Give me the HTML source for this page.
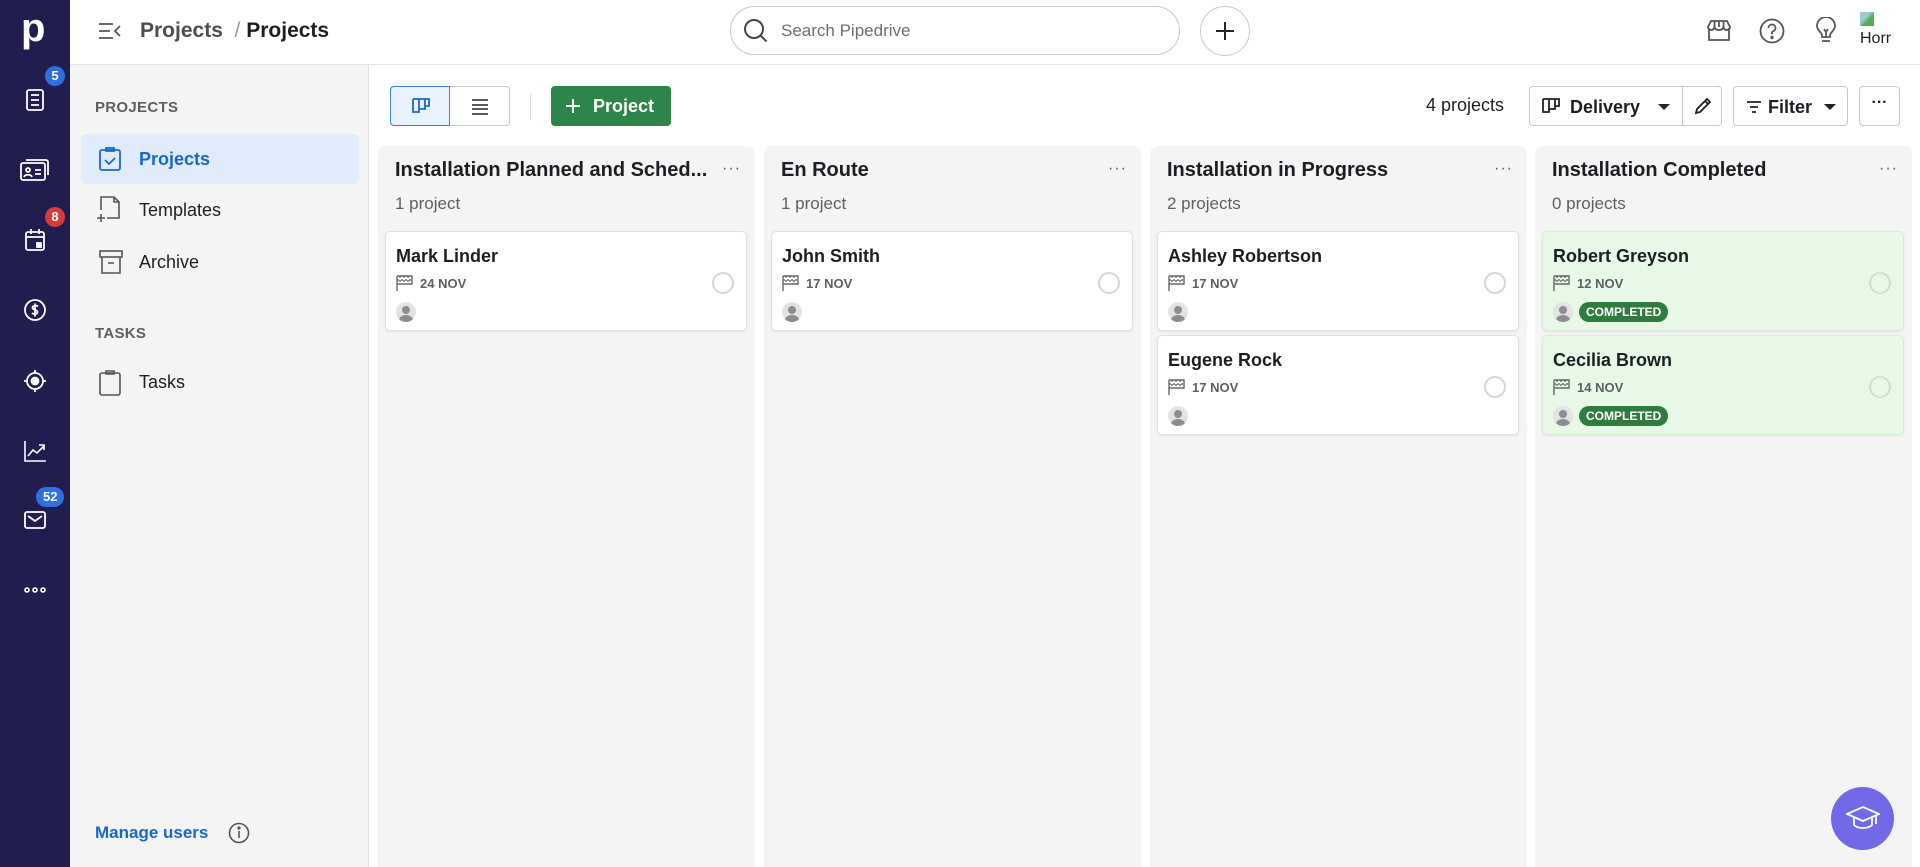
<!DOCTYPE html>
<html style="overflow:hidden;height:867px"><head><meta charset="utf-8"><style>
*{box-sizing:border-box;margin:0;padding:0}
body{width:1920px;height:867px;overflow:hidden;font-family:"Liberation Sans",sans-serif;background:#fff;position:relative;color:#1b1f23}
.abs{position:absolute}
.rail{left:0;top:0;width:70px;height:867px;background:#211d4e}
.ri{position:absolute;left:23px;width:24px;height:24px}
.badge{position:absolute;height:20px;min-width:20px;border-radius:10px;color:#fff;font-size:13px;font-weight:bold;text-align:center;line-height:20px;padding:0 5px}
.hdr{left:70px;top:0;width:1850px;height:65px;border-bottom:1px solid #e3e3e3;background:#fff}
.side{left:70px;top:65px;width:299px;height:802px;background:#f4f4f4;border-right:1px solid #e0e0e0}
.sl{position:absolute;left:25px;font-size:15px;color:#5c5f63;font-weight:bold;letter-spacing:.3px}
.si{position:absolute;left:11px;width:278px;height:50px;border-radius:6px;font-size:18px;line-height:50px;padding-left:58px;color:#1b1f23}
.si svg{position:absolute;left:18px;top:13px}
.btn{position:absolute;border:1px solid #c6c8cc;border-radius:4px;background:#fff;height:40px;top:86px}
.col{position:absolute;top:146px;width:377px;height:721px;background:#f4f4f4;border-radius:8px 8px 0 0}
.ct{position:absolute;left:17px;top:13px;font-size:20px;font-weight:bold;color:#1b1f23;white-space:nowrap}
.cc{position:absolute;left:17px;top:48px;font-size:17px;color:#5c5f63}
.dots{position:absolute;right:14px;top:14px;font-size:16px;color:#555;letter-spacing:1px}
.card{position:absolute;left:7px;width:362px;height:100px;background:#fff;border:1px solid #e0e0e0;border-radius:5px;box-shadow:0 1px 2px rgba(0,0,0,.08)}
.card.g{background:#e8f8e6;border-color:#d6ecd4}
.nm{position:absolute;left:10px;top:14px;font-size:18px;font-weight:bold}
.dt{position:absolute;left:10px;top:43px;font-size:13px;font-weight:bold;color:#5c5f63}
.dt svg{vertical-align:-3px;margin-right:6px}
.av{position:absolute;left:10px;top:70px;width:20px;height:20px;border-radius:50%;background:#e3e3e3;overflow:hidden}
.av:before{content:"";position:absolute;left:6px;top:4px;width:8px;height:8px;border-radius:50%;background:#8a8d91}
.av:after{content:"";position:absolute;left:3px;top:13px;width:14px;height:10px;border-radius:50%;background:#8a8d91}
.chk{position:absolute;right:12px;top:40px;width:22px;height:22px;border-radius:50%;border:2px solid #d6d6d6}
.comp{position:absolute;left:36px;top:70px;height:20px;border-radius:10px;background:#2e7d3e;color:#fff;font-size:12px;font-weight:bold;line-height:20px;padding:0 7px}
</style></head><body>
<div class="abs rail">
  <div class="abs" style="left:21px;top:8px;color:#fff;font-size:40px;font-weight:bold;line-height:40px">p</div>
  <svg class="ri" style="top:88px" viewBox="0 0 24 24" fill="none" stroke="#fff" stroke-width="1.8"><rect x="4" y="2" width="16" height="20" rx="2"/><path d="M8 7h8M8 12h8M8 17h8"/></svg>
  <div class="badge" style="left:45px;top:66px;background:#2f6fe0">5</div>
  <svg class="ri" style="top:158px;left:20px;width:30px" viewBox="0 0 30 24" fill="none" stroke="#fff" stroke-width="1.8"><rect x="1" y="5" width="24" height="17" rx="2"/><path d="M6 2h20a2 2 0 0 1 2 2v13"/><circle cx="8" cy="12" r="2"/><path d="M4 19c1-3 7-3 8 0M15 12h6M15 16h6"/></svg>
  <svg class="ri" style="top:228px" viewBox="0 0 24 24" fill="none" stroke="#fff" stroke-width="1.8"><rect x="3" y="4" width="18" height="18" rx="2"/><path d="M8 1v5M16 1v5M3 9h18"/><rect x="14" y="15" width="4" height="4" fill="#fff"/></svg>
  <div class="badge" style="left:45px;top:207px;background:#d63b3b">8</div>
  <svg class="ri" style="top:298px" viewBox="0 0 24 24" fill="none" stroke="#fff" stroke-width="1.8"><circle cx="12" cy="12" r="10"/><path d="M15 8.5c-1-1-5-1.5-5.5 1s5 2 5 4.5-4 2.5-5.5 1M12 5.5v13"/></svg>
  <svg class="ri" style="top:369px" viewBox="0 0 24 24" fill="none" stroke="#fff" stroke-width="1.8"><circle cx="12" cy="12" r="8"/><circle cx="12" cy="12" r="3.5" fill="#fff"/><path d="M12 1v3M12 20v3M1 12h3M20 12h3"/></svg>
  <svg class="ri" style="top:439px" viewBox="0 0 24 24" fill="none" stroke="#fff" stroke-width="1.6"><path d="M2 2v20h21M5 17l5-6 4 3 7-7M16 6h5v5"/></svg>
  <div class="badge" style="left:36px;top:487px;background:#2f6fe0;padding:0 7px">52</div>
  <svg class="ri" style="top:508px" viewBox="0 0 24 24" fill="none" stroke="#fff" stroke-width="1.8"><rect x="2" y="4" width="20" height="16" rx="2"/><path d="M5 8l7 5 7-5"/></svg>
  <svg class="ri" style="top:578px" viewBox="0 0 24 24" fill="none" stroke="#fff" stroke-width="1.6"><circle cx="4" cy="12" r="2"/><circle cx="12" cy="12" r="2"/><circle cx="20" cy="12" r="2"/></svg>
</div>
<div class="abs hdr">
  <svg class="abs" style="left:28px;top:21px" width="24" height="20" viewBox="0 0 24 20" fill="none" stroke="#555" stroke-width="1.8"><path d="M1 3h14M1 10h11M1 17h14M22 5l-5 5 5 5"/></svg>
  <div class="abs" style="left:70px;top:19px;font-size:21px;color:#4a4d52;font-weight:bold">Projects <span style="color:#999;font-weight:normal">&nbsp;/&nbsp;</span><span style="color:#1b1f23">Projects</span></div>
  <div class="abs" style="left:660px;top:6px;width:450px;height:49px;border:1px solid #c6c8cc;border-radius:25px">
    <svg class="abs" style="left:12px;top:11px" width="26" height="26" viewBox="0 0 26 26" fill="none" stroke="#444" stroke-width="2"><circle cx="11" cy="11" r="9"/><path d="M17.5 17.5l6 6"/></svg>
    <div class="abs" style="left:50px;top:14px;font-size:17px;color:#6a6d72">Search Pipedrive</div>
  </div>
  <div class="abs" style="left:1130px;top:6px;width:50px;height:50px;border:1px solid #c6c8cc;border-radius:50%">
    <svg class="abs" style="left:14px;top:14px" width="20" height="20" viewBox="0 0 20 20" stroke="#222" stroke-width="2"><path d="M10 1v18M1 10h18"/></svg>
  </div>
  <svg class="abs" style="left:1636px;top:18px" width="26" height="26" viewBox="0 0 26 26" fill="none" stroke="#555" stroke-width="1.8"><path d="M3 10v12h20V10M2 9l3-6h16l3 6c0 2-2 3-3.5 3S18 11 17.5 9c-.5 2-2 3-4.5 3S9 11 8.5 9C8 11 6.5 12 5 12S2 11 2 9zM8.5 3v6M13 3v6M17.5 3v6"/></svg>
  <svg class="abs" style="left:1689px;top:18px" width="26" height="26" viewBox="0 0 26 26" fill="none" stroke="#555" stroke-width="1.8"><circle cx="13" cy="13" r="11.5"/><path d="M9.5 10a3.5 3.5 0 1 1 4.5 3.3c-.7.3-1 .8-1 1.5v1.5"/><circle cx="13" cy="19.5" r=".8" fill="#555"/></svg>
  <svg class="abs" style="left:1745px;top:17px" width="22" height="28" viewBox="0 0 22 28" fill="none" stroke="#555" stroke-width="1.8"><path d="M7 20v-2c0-2-5-5-5-9a9 9 0 0 1 18 0c0 4-5 7-5 9v2zM7 24h8M9 12l2 3 2-3M11 15v5"/></svg>
  <div class="abs" style="left:1790px;top:12px;width:14px;height:14px;background:linear-gradient(135deg,#9cc 40%,#5a5 60%)"></div>
  <div class="abs" style="left:1790px;top:30px;font-size:16px;color:#222;width:32px;overflow:hidden;white-space:nowrap">Horr</div>
</div>
<div class="abs side">
  <div class="sl" style="top:34px">PROJECTS</div>
  <div class="si" style="top:69px;background:#e0ecfb;color:#1a67c9;font-weight:bold">
    <svg width="22" height="24" viewBox="0 0 22 24" fill="none" stroke="#1a67c9" stroke-width="1.8"><rect x="1" y="3" width="20" height="20" rx="2"/><path d="M7 1h8v3H7zM6 13l4 4 6-6"/></svg>Projects</div>
  <div class="si" style="top:120px"><svg width="26" height="28" viewBox="0 0 26 28" fill="none" stroke="#555" stroke-width="1.6" style="top:11px;left:15px"><path d="M5 14V1h13l5 5v16h-12M18 1v5h5M1 22h8M5 18v8"/></svg>Templates</div>
  <div class="si" style="top:172px"><svg width="24" height="24" viewBox="0 0 24 24" fill="none" stroke="#555" stroke-width="1.6"><rect x="1" y="1" width="22" height="6"/><path d="M3 7v16h18V7M9 13h6"/></svg>Archive</div>
  <div class="sl" style="top:260px">TASKS</div>
  <div class="si" style="top:292px"><svg width="22" height="26" viewBox="0 0 22 26" fill="none" stroke="#555" stroke-width="1.6"><rect x="1" y="3" width="20" height="22" rx="2"/><path d="M7 1h8v3H7z"/></svg>Tasks</div>
  <div class="abs" style="left:25px;top:758px;font-size:17px;color:#1a67c9;font-weight:bold">Manage users</div>
  <svg class="abs" style="left:158px;top:757px" width="22" height="22" viewBox="0 0 22 22" fill="none" stroke="#555" stroke-width="1.6"><circle cx="11" cy="11" r="9.5"/><path d="M11 9v7"/><circle cx="11" cy="6" r=".8" fill="#555"/></svg>
</div>
<div class="btn" style="left:390px;width:60px;background:#eaf2fe;border-color:#3a7bd5;border-radius:4px 0 0 4px">
  <svg class="abs" style="left:20px;top:10px" width="20" height="20" viewBox="0 0 20 20" fill="none" stroke="#1a67c9" stroke-width="1.8"><path d="M2 2h16v7h-4v-7M8 2v13H2V2M14 2v10H8"/></svg></div>
<div class="btn" style="left:450px;width:60px;border-left:none;border-radius:0 4px 4px 0">
  <svg class="abs" style="left:21px;top:11px" width="18" height="18" viewBox="0 0 18 18" stroke="#222" stroke-width="1.6"><path d="M1 2h16M1 7h16M1 11h16M1 16h16"/></svg></div>
<div class="abs" style="left:530px;top:94px;width:1px;height:26px;background:#ddd"></div>
<div class="abs" style="left:551px;top:86px;width:120px;height:40px;background:#2d8549;border-radius:4px;color:#fff;font-size:18px;font-weight:bold;line-height:40px;padding-left:42px">
  <svg class="abs" style="left:14px;top:12px" width="16" height="16" viewBox="0 0 16 16" stroke="#fff" stroke-width="2"><path d="M8 1v14M1 8h14"/></svg>Project</div>
<div class="abs" style="left:1426px;top:95px;font-size:18px;color:#1b1f23">4 projects</div>
<div class="btn" style="left:1529px;width:154px;border-radius:4px 0 0 4px">
  <svg class="abs" style="left:11px;top:10px" width="20" height="20" viewBox="0 0 20 20" fill="none" stroke="#222" stroke-width="1.8"><path d="M2 2h16v7h-4v-7M8 2v13H2V2M14 2v10H8"/></svg>
  <div class="abs" style="left:40px;top:10px;font-size:18px;font-weight:bold">Delivery</div>
  <div class="abs" style="left:128px;top:17px;border:6px solid transparent;border-top:6px solid #222;border-bottom:none"></div></div>
<div class="btn" style="left:1682px;width:40px;border-radius:0 4px 4px 0">
  <svg class="abs" style="left:11px;top:10px" width="18" height="18" viewBox="0 0 18 18" fill="none" stroke="#222" stroke-width="1.8"><path d="M2 16l1-4L13 2l3 3L6 15zM11 4l3 3"/></svg></div>
<div class="btn" style="left:1733px;width:115px">
  <svg class="abs" style="left:12px;top:13px" width="16" height="14" viewBox="0 0 16 14" stroke="#222" stroke-width="1.8"><path d="M1 2h14M4 7h8M6 12h4"/></svg>
  <div class="abs" style="left:34px;top:10px;font-size:18px;font-weight:bold">Filter</div>
  <div class="abs" style="left:90px;top:17px;border:6px solid transparent;border-top:6px solid #222;border-bottom:none"></div></div>
<div class="btn" style="left:1859px;width:41px;text-align:center;font-size:16px;line-height:32px;font-weight:bold">···</div>
<div class="col" style="left:378px"><div class="ct">Installation Planned and Sched...</div><div class="dots">···</div><div class="cc">1 project</div>
  <div class="card" style="top:85px"><div class="nm">Mark Linder</div><div class="dt"><svg width="18" height="16" viewBox="0 0 18 16" fill="none" stroke="#666" stroke-width="1.4"><path d="M1 1v15M1 1h15v8H1"/><path d="M4 1v8M8 1v8M12 1v8M1 5h15" stroke-dasharray="2 2"/></svg>24 NOV</div><div class="av"></div><div class="chk"></div></div></div>
<div class="col" style="left:764px"><div class="ct">En Route</div><div class="dots">···</div><div class="cc">1 project</div>
  <div class="card" style="top:85px"><div class="nm">John Smith</div><div class="dt"><svg width="18" height="16" viewBox="0 0 18 16" fill="none" stroke="#666" stroke-width="1.4"><path d="M1 1v15M1 1h15v8H1"/><path d="M4 1v8M8 1v8M12 1v8M1 5h15" stroke-dasharray="2 2"/></svg>17 NOV</div><div class="av"></div><div class="chk"></div></div></div>
<div class="col" style="left:1150px"><div class="ct">Installation in Progress</div><div class="dots">···</div><div class="cc">2 projects</div>
  <div class="card" style="top:85px"><div class="nm">Ashley Robertson</div><div class="dt"><svg width="18" height="16" viewBox="0 0 18 16" fill="none" stroke="#666" stroke-width="1.4"><path d="M1 1v15M1 1h15v8H1"/><path d="M4 1v8M8 1v8M12 1v8M1 5h15" stroke-dasharray="2 2"/></svg>17 NOV</div><div class="av"></div><div class="chk"></div></div>
  <div class="card" style="top:189px"><div class="nm">Eugene Rock</div><div class="dt"><svg width="18" height="16" viewBox="0 0 18 16" fill="none" stroke="#666" stroke-width="1.4"><path d="M1 1v15M1 1h15v8H1"/><path d="M4 1v8M8 1v8M12 1v8M1 5h15" stroke-dasharray="2 2"/></svg>17 NOV</div><div class="av"></div><div class="chk"></div></div></div>
<div class="col" style="left:1535px"><div class="ct">Installation Completed</div><div class="dots">···</div><div class="cc">0 projects</div>
  <div class="card g" style="top:85px"><div class="nm">Robert Greyson</div><div class="dt"><svg width="18" height="16" viewBox="0 0 18 16" fill="none" stroke="#666" stroke-width="1.4"><path d="M1 1v15M1 1h15v8H1"/><path d="M4 1v8M8 1v8M12 1v8M1 5h15" stroke-dasharray="2 2"/></svg>12 NOV</div><div class="av"></div><div class="comp">COMPLETED</div><div class="chk" style="border-color:#cfe0cd"></div></div>
  <div class="card g" style="top:189px"><div class="nm">Cecilia Brown</div><div class="dt"><svg width="18" height="16" viewBox="0 0 18 16" fill="none" stroke="#666" stroke-width="1.4"><path d="M1 1v15M1 1h15v8H1"/><path d="M4 1v8M8 1v8M12 1v8M1 5h15" stroke-dasharray="2 2"/></svg>14 NOV</div><div class="av"></div><div class="comp">COMPLETED</div><div class="chk" style="border-color:#cfe0cd"></div></div></div>
<div class="abs" style="left:1831px;top:787px;width:63px;height:63px;border-radius:50%;background:#7269e6">
  <svg class="abs" style="left:15px;top:17px" width="34" height="28" viewBox="0 0 34 28" fill="none" stroke="#fff" stroke-width="1.8"><path d="M1 10L17 3l16 7-16 7zM8 13v8c4 4 14 4 18 0v-8M30 11v9"/></svg></div>
</body></html>
